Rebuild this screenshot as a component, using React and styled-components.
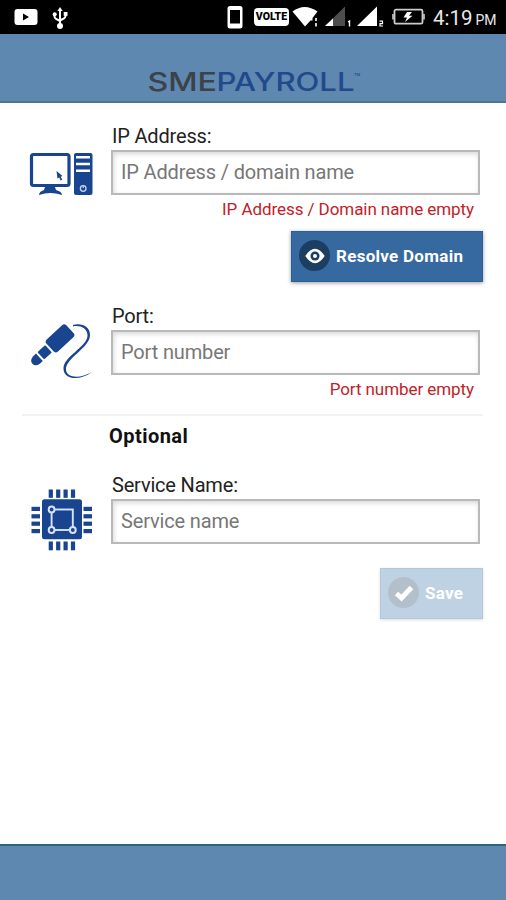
import React from "react";
import styled, { createGlobalStyle } from "styled-components";

function App() {
  return (
    <Screen>
      <GlobalStyle />
      <StatusBar />
      <Header>
        <Logo />
      </Header>
      <Content>
        <Field
          icon={<ComputerIcon />}
          label="IP Address:"
          placeholder="IP Address / domain name"
          error="IP Address / Domain name empty"
        />
        <Actions $top="8px">
          <Button $width="192px">
            <Badge>
              <EyeIcon />
            </Badge>
            Resolve Domain
          </Button>
        </Actions>
        <Gap $height="21px" />
        <Field
          icon={<JackIcon />}
          label="Port:"
          placeholder="Port number"
          error="Port number empty"
        />
        <Divider />
        <Optional>Optional</Optional>
        <Field
          icon={<ChipIcon />}
          label="Service Name:"
          placeholder="Service name"
        />
        <Actions $top="15px">
          <Button $width="103px" disabled>
            <Badge>
              <CheckIcon />
            </Badge>
            Save
          </Button>
        </Actions>
      </Content>
      <Footer />
    </Screen>
  );
}

export default App;

function Field({ icon, label, placeholder, error }) {
  return (
    <Row>
      <IconCell>{icon}</IconCell>
      <FieldBody>
        <Label>{label}</Label>
        <Input type="text" placeholder={placeholder} />
        {error && <ErrorText>{error}</ErrorText>}
      </FieldBody>
    </Row>
  );
}

function StatusBar() {
  return (
    <Status>
      <StatusGroup>
        <svg width="24" height="18" viewBox="0 0 24 18">
          <rect x="0.5" y="1" width="23" height="16" rx="3" fill="#fff" />
          <path d="M9 5.5 L15 9 L9 12.5 Z" fill="#000" />
        </svg>
        <UsbIcon width="16" height="22" viewBox="0 0 16 22">
          <path d="M8 3 V19 M2.5 7 V9.5 Q2.5 11 4 11.8 L8 14 M13.5 6 V9 Q13.5 10.5 12 11.3 L8 13.5" fill="none" stroke="#fff" strokeWidth="2" />
          <path d="M8 0 L10.6 4 H5.4 Z" fill="#fff" />
          <circle cx="8" cy="19" r="3" fill="#fff" />
          <circle cx="2.7" cy="7.3" r="2" fill="#fff" />
          <rect x="11.7" y="5" width="3.8" height="3.8" fill="#fff" />
        </UsbIcon>
      </StatusGroup>
      <StatusGroup>
        <svg width="16" height="24" viewBox="0 0 16 24">
          <rect x="0.5" y="1" width="15" height="22.5" rx="2.5" fill="#fff" />
          <rect x="3" y="5" width="10" height="13.5" fill="#000" />
        </svg>
        <Volte>VOLTE</Volte>
        <WifiIcon width="27" height="22" viewBox="0 0 27 22">
          <path d="M0.5 5.5 Q12.5 -3.5 25.5 5.5 L20.5 12 V14.5 H18.5 L13 20.5 Z" fill="#fff" />
          <path d="M24 12 v3 M24 17 v3.5" stroke="#fff" strokeWidth="1.6" />
        </WifiIcon>
        <SignalIcon width="27" height="22" viewBox="0 0 27 22">
          <path d="M0 20 L20 0.5 V20 Z" fill="#4d4d4d" />
          <path d="M0 20 L8 12.5 V20 Z" fill="#fff" />
          <path d="M23 16 L24.5 15 V20.5" fill="none" stroke="#fff" strokeWidth="1.4" />
        </SignalIcon>
        <SignalIcon $left="5px" width="27" height="22" viewBox="0 0 27 22">
          <path d="M0 20 L20 0.5 V20 Z" fill="#fff" />
          <path d="M22.5 15.2 H25.5 V17.6 H23 V20 H26" fill="none" stroke="#fff" strokeWidth="1.2" />
        </SignalIcon>
        <BatteryIcon width="33" height="18" viewBox="0 0 33 18">
          <rect x="2.5" y="1.7" width="28" height="14" rx="1.5" fill="none" stroke="#ccc" strokeWidth="1.8" />
          <path d="M1 6 V11.5 M32 6 V11.5" stroke="#ccc" strokeWidth="1.6" />
          <path d="M15 4 L11.5 9.5 H15 L13 14 L20.5 7.8 H17 L20 4 Z" fill="#fff" />
        </BatteryIcon>
        <Clock>
          4:19<Meridiem>PM</Meridiem>
        </Clock>
      </StatusGroup>
    </Status>
  );
}

function Logo() {
  return (
    <svg width="214" height="32" viewBox="0 0 214 32" fontFamily="Inter, sans-serif" fontSize="25" fontWeight="500">
      <text x="-0.5" y="24.5" textLength="69.5" lengthAdjust="spacingAndGlyphs" fill="#3b4248">SME</text>
      <text x="68.5" y="24.5" textLength="138" lengthAdjust="spacingAndGlyphs" fill="#21498c">PAYROLL</text>
      <text x="206" y="10" fontSize="4" fill="#21498c">TM</text>
    </svg>
  );
}

function ComputerIcon() {
  return (
    <svg width="72" height="66" viewBox="24 138 72 66">
      <rect x="31.5" y="154.5" width="37.5" height="31" rx="2" fill="#fff" stroke="#184490" strokeWidth="3.2" />
      <path d="M45 187 H55 L56 190 Q62 191.5 62 195 Q50 191 39 195 Q39 191.5 44 190 Z" fill="#184490" />
      <path d="M56.5 171 L62.5 176 L60.7 176.8 L62.3 179.8 L60.6 180.4 L59.3 177.6 L57.5 178.6 Z" fill="#184490" />
      <rect x="74" y="153" width="18.5" height="42" rx="2" fill="#184490" />
      <path d="M76 157.3 H90 M76 164 H90 M76 170.7 H90" stroke="#fff" strokeWidth="2.5" />
      <circle cx="83.2" cy="188.5" r="2.8" fill="none" stroke="#c5d6f0" strokeWidth="1.3" />
      <path d="M83.2 185 V188" stroke="#c5d6f0" strokeWidth="1.2" />
    </svg>
  );
}

function JackIcon() {
  return (
    <svg width="72" height="66" viewBox="24 318 72 66" fill="#184490">
      <g transform="translate(59.5 338.5) rotate(-43)">
        <rect x="-13" y="-8" width="27" height="16.5" rx="3" />
        <rect x="-25.5" y="-5" width="10.5" height="10" rx="1" />
        <path d="M-27.5 -5 H-32 Q-37 -4 -37 0 Q-37 4 -32 5 H-27.5 Z" />
      </g>
      <path d="M73 325 C81 322.5 90 326 90 335 C90 348 65 358 66 370 C67 378 80 379 92 372 C80 381 64 380 63.5 369 C63 356 88 347 87.5 335 C87 328 80 325 73 326.5 Z" />
    </svg>
  );
}

function ChipIcon() {
  const pins = [0, 7.4, 14.8, 22.2];
  return (
    <svg width="72" height="66" viewBox="24 487 72 66" fill="#184490">
      {pins.map((p) => (
        <g key={p}>
          <rect x={48.7 + p} y="489.5" width="4.2" height="8.3" />
          <rect x={48.7 + p} y="541.5" width="4.2" height="8.8" />
          <rect x="31.5" y={506.8 + p} width="8.5" height="4.2" />
          <rect x="83.5" y={506.8 + p} width="8.5" height="4.2" />
        </g>
      ))}
      <rect x="42" y="499.3" width="40" height="40" rx="2.5" />
      <rect x="51.6" y="509.5" width="21.2" height="20.5" fill="none" stroke="#d6e4fa" strokeWidth="1.9" />
      <g fill="#184490" stroke="#d6e4fa" strokeWidth="2">
        <circle cx="51.6" cy="509.5" r="2.9" />
        <circle cx="51.6" cy="530" r="2.9" />
        <circle cx="72.8" cy="530" r="2.9" />
      </g>
    </svg>
  );
}

function EyeIcon() {
  return (
    <svg width="20" height="16" viewBox="0 0 20 16">
      <path d="M0.3 8 Q10 -6.5 19.7 8 Q10 22.5 0.3 8 Z" fill="#fff" />
      <circle cx="10" cy="8" r="4.5" fill="#1d3e63" />
      <circle cx="10" cy="8" r="2" fill="#fff" />
    </svg>
  );
}

function CheckIcon() {
  return (
    <svg width="20" height="18" viewBox="0 0 20 18">
      <path d="M2.5 9.5 L7.5 14 L17.5 3.5" fill="none" stroke="#fff" strokeWidth="5" />
    </svg>
  );
}

const GlobalStyle = createGlobalStyle`
  body {
    margin: 0;
    background: #fff;
    font-family: Roboto, sans-serif;
  }
`;

const Screen = styled.div`
  display: flex;
  flex-direction: column;
  height: 900px;
  overflow: hidden;
`;

const Status = styled.div`
  display: flex;
  flex: none;
  align-items: center;
  justify-content: space-between;
  height: 34px;
  padding: 0 10px 0 14px;
  box-sizing: border-box;
  background: #000;
`;

const StatusGroup = styled.div`
  display: flex;
  align-items: center;
`;

const UsbIcon = styled.svg`
  margin: 2px 0 0 14px;
`;

const Volte = styled.span`
  width: 35px;
  height: 18px;
  margin-left: 11px;
  border-radius: 4px;
  color: #000;
  background: #fff;
  font-size: 10.5px;
  font-weight: 900;
  line-height: 18px;
  text-align: center;
`;

const WifiIcon = styled.svg`
  margin-left: 3px;
`;

const SignalIcon = styled.svg`
  margin-left: ${(props) => props.$left || "6px"};
`;

const BatteryIcon = styled.svg`
  margin-left: 8px;
`;

const Clock = styled.span`
  width: 63px;
  margin: 3px 0 0 8px;
  color: #e8e8e8;
  font-size: 20.5px;
  line-height: 24px;
  white-space: nowrap;
`;

const Meridiem = styled.span`
  margin-left: 3px;
  font-size: 14px;
`;

const Header = styled.header`
  display: flex;
  flex: none;
  justify-content: center;
  align-items: flex-end;
  height: 69px;
  padding: 0 0 3px 4px;
  box-sizing: border-box;
  background: #5e88b0;
  border-bottom: 2px solid #487797;
`;

const Content = styled.main`
  flex: 1;
  padding: 20px 23px 0 22px;
`;

const Row = styled.div`
  display: flex;
`;

const IconCell = styled.div`
  flex: none;
  width: 89px;
  padding: 15px 0 0 2px;
  box-sizing: border-box;

  svg {
    display: block;
  }
`;

const FieldBody = styled.div`
  display: flex;
  flex-direction: column;
  width: 369px;
`;

const Label = styled.label`
  height: 27px;
  padding-left: 1px;
  color: #222;
  font-size: 20px;
  letter-spacing: -0.18px;
  line-height: 26px;
`;

const Input = styled.input`
  height: 45px;
  padding: 0 8px 2px;
  box-sizing: border-box;
  border: 2px solid #b9b9b9;
  border-radius: 0;
  outline: none;
  background: #fff;
  box-shadow: inset 1px 2px 5px rgba(0, 0, 0, 0.16);
  color: #222;
  font-family: inherit;
  font-size: 20px;
  letter-spacing: -0.15px;

  &::placeholder {
    color: #777;
  }
`;

const ErrorText = styled.span`
  height: 28px;
  padding-right: 6px;
  color: #c22127;
  font-size: 17px;
  letter-spacing: -0.07px;
  line-height: 28px;
  text-align: right;
`;

const Actions = styled.div`
  display: flex;
  justify-content: flex-end;
  margin-top: ${(props) => props.$top};
`;

const Gap = styled.div`
  height: ${(props) => props.$height};
`;

const Badge = styled.span`
  display: flex;
  flex: none;
  align-items: center;
  justify-content: center;
  width: 31px;
  height: 31px;
  margin-right: 6px;
  border-radius: 50%;
  background: #1d3e63;
`;

const Button = styled.button`
  display: flex;
  align-items: center;
  width: ${(props) => props.$width};
  height: 51px;
  padding: 0 0 2px 7px;
  box-sizing: border-box;
  border: 1px solid #28609a;
  color: #fff;
  background: #35699f;
  box-shadow: 0 1px 4px rgba(0, 0, 0, 0.4);
  font-family: inherit;
  font-size: 17px;
  font-weight: 700;
  letter-spacing: 0.28px;
  white-space: nowrap;

  &:disabled {
    border-color: #b0c9dd;
    background: #bfd2e4;
    box-shadow: 0 1px 3px rgba(0, 0, 0, 0.14);

    ${Badge} {
      background: #b3c0cc;
    }
  }
`;

const Divider = styled.div`
  height: 2px;
  margin-top: 11px;
  background: #f2f2f2;
`;

const Optional = styled.h2`
  height: 56px;
  margin: 0;
  padding: 6px 0 0 87px;
  box-sizing: border-box;
  color: #111;
  font-size: 20px;
  font-weight: 700;
  letter-spacing: 0.45px;
  line-height: 28px;
`;

const Footer = styled.footer`
  flex: none;
  height: 56px;
  box-sizing: border-box;
  background: #5e88b0;
  border-top: 2px solid #28677f;
`;
